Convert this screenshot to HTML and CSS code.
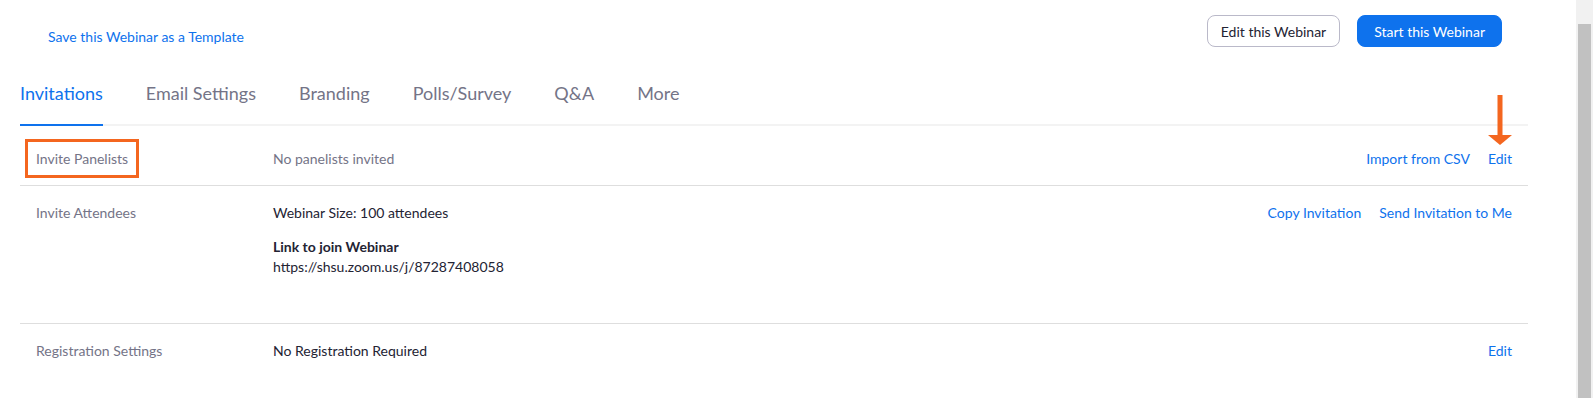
FILE: index.html
```html
<!DOCTYPE html>
<html lang="en">
<head>
  <meta charset="UTF-8">
  <meta name="viewport" content="width=device-width, initial-scale=1.0">
  <title>Webinar</title>
  <link rel="stylesheet" href="styles.css">
</head>
<body>
  <div class="page">
    <div class="header">
      <a class="template-link" href="#">Save this Webinar as a Template</a>
      <div class="header-buttons">
        <button class="btn btn-outline">Edit this Webinar</button>
        <button class="btn btn-primary">Start this Webinar</button>
      </div>
    </div>

    <div class="tabs">
      <a class="tab active" href="#">Invitations</a>
      <a class="tab" href="#">Email Settings</a>
      <a class="tab" href="#">Branding</a>
      <a class="tab" href="#">Polls/Survey</a>
      <a class="tab" href="#">Q&amp;A</a>
      <a class="tab" href="#">More</a>
    </div>

    <div class="rows">
      <div class="row">
        <div class="label"><span class="marked">Invite Panelists</span></div>
        <div class="value muted">No panelists invited</div>
        <div class="actions">
          <a href="#">Import from CSV</a>
          <a href="#" class="pointed">Edit
            <svg class="arrow" width="24" height="50" viewBox="0 0 24 50">
              <rect x="9.5" y="0" width="5" height="41" fill="#f4661f"/>
              <polygon points="0,40 24,40 12,50" fill="#f4661f"/>
            </svg>
          </a>
        </div>
      </div>

      <div class="row">
        <div class="label">Invite Attendees</div>
        <div class="value">
          <div>Webinar Size: 100 attendees</div>
          <div class="join">
            <div class="join-title">Link to join Webinar</div>
            <div>https://shsu.zoom.us/j/87287408058</div>
          </div>
        </div>
        <div class="actions">
          <a href="#">Copy Invitation</a>
          <a href="#">Send Invitation to Me</a>
        </div>
      </div>

      <div class="row last">
        <div class="label">Registration Settings</div>
        <div class="value">No Registration Required</div>
        <div class="actions">
          <a href="#">Edit</a>
        </div>
      </div>
    </div>
  </div>

  <div class="scrollbar"><div class="thumb"></div></div>
</body>
</html>
```

FILE: styles.css
```css
html, body { height: 100%; }
body { margin: 0; display: flex; overflow: hidden; font-family: Lato, "Open Sans", sans-serif; font-size: 14px; color: #232333; background: #fff; }
a { color: #0e72ed; text-decoration: none; }

.page { flex: 1; padding: 0 48px 0 20px; }

.header { height: 60px; display: flex; justify-content: space-between; align-items: flex-start; }
.template-link { margin: 28px 0 0 28px; font-size: 14px; line-height: 18px; }
.header-buttons { display: flex; gap: 17px; padding: 15px 26px 0 0; }
.btn { height: 32px; padding: 0 13px; border-radius: 8px; font-family: Lato, sans-serif; font-size: 14px; cursor: pointer; }
.btn-outline { background: #fff; color: #232333; border: 1px solid #bab9c9; }
.btn-primary { background: #0e72ed; color: #fff; border: 1px solid #0e72ed; padding: 0 16px; }

.tabs { display: flex; border-bottom: 2px solid #f3f3f3; padding-top: 21px; }
.tab { font-size: 18px; line-height: 24px; color: #747487; padding-bottom: 19px; margin-right: 43px; margin-bottom: -2px; border-bottom: 2px solid transparent; }
.tab.active { color: #0e72ed; border-bottom-color: #0e72ed; }

.rows { margin-top: 6px; }
.row { display: flex; padding: 17px 16px 16px; border-bottom: 1px solid #dedede; line-height: 20px; }
.row.last { border-bottom: none; }
.label { width: 237px; flex-shrink: 0; color: #747487; }
.marked { outline: 3px solid #f4661f; outline-offset: 8px; }
.value { flex: 1; }
.value.muted { color: #747487; }
.join { margin: 14px 0 30px; }
.join-title { font-weight: bold; }
.actions { display: flex; gap: 18px; align-items: flex-start; }
.pointed { position: relative; }
.arrow { position: absolute; left: 50%; bottom: 100%; margin: 0 0 4px -12px; }

.scrollbar { width: 17px; background: #f1f1f1; display: flex; flex-direction: column; }
.thumb { flex: 1; margin: 24px 2px 0 2px; background: #c1c1c1; }
```
